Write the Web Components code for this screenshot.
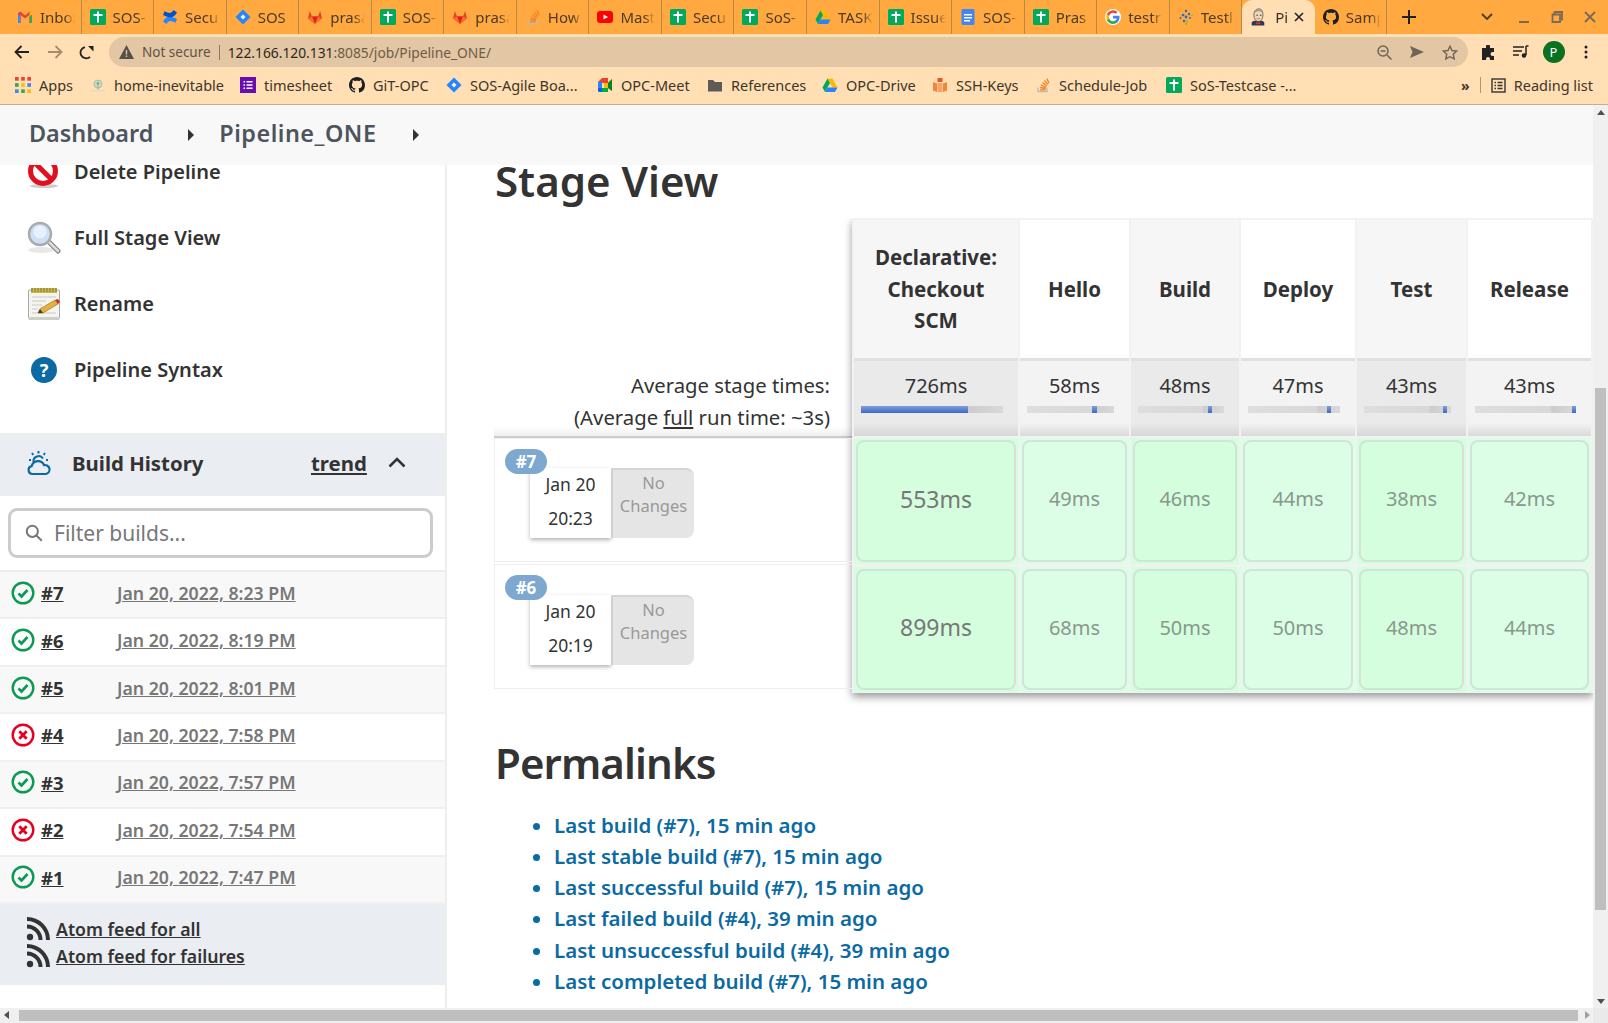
<!DOCTYPE html>
<html lang="en"><head><meta charset="utf-8"><title>Pipeline_ONE</title>
<style>
html,body{margin:0;padding:0;height:100%;overflow:hidden;background:#fff}
body{font-family:"Noto Sans","Open Sans",sans-serif;color:#333}
</style></head><body>
<jk-app>
  <chrome-tabstrip>
    <chrome-tab icon="gmail">Inbox</chrome-tab><chrome-tab icon="sheet">SOS-</chrome-tab><chrome-tab icon="conf">Secu</chrome-tab><chrome-tab icon="jira">SOS</chrome-tab><chrome-tab icon="gitlab">prasa</chrome-tab><chrome-tab icon="sheet">SOS-</chrome-tab><chrome-tab icon="gitlab">prasa</chrome-tab><chrome-tab icon="so">How</chrome-tab><chrome-tab icon="yt">Mast</chrome-tab><chrome-tab icon="sheet">Secu</chrome-tab><chrome-tab icon="sheet">SoS-</chrome-tab><chrome-tab icon="drive">TASK</chrome-tab><chrome-tab icon="sheet">Issue</chrome-tab><chrome-tab icon="docs">SOS-</chrome-tab><chrome-tab icon="sheet">Pras</chrome-tab><chrome-tab icon="google">testr</chrome-tab><chrome-tab icon="testl">Testl</chrome-tab><chrome-tab icon="jenkins" active>Pi</chrome-tab><chrome-tab icon="github">Samp</chrome-tab>
  </chrome-tabstrip>
  <chrome-toolbar></chrome-toolbar>
  <chrome-bookmarks>
    <chrome-bookmark icon="apps" w="75">Apps</chrome-bookmark><chrome-bookmark icon="home" w="150">home-inevitable</chrome-bookmark><chrome-bookmark icon="purple" w="109">timesheet</chrome-bookmark><chrome-bookmark icon="github" w="97">GiT-OPC</chrome-bookmark><chrome-bookmark icon="jira" w="151">SOS-Agile Boa...</chrome-bookmark><chrome-bookmark icon="meet" w="110">OPC-Meet</chrome-bookmark><chrome-bookmark icon="folder" w="115">References</chrome-bookmark><chrome-bookmark icon="drive" w="110">OPC-Drive</chrome-bookmark><chrome-bookmark icon="aws" w="103">SSH-Keys</chrome-bookmark><chrome-bookmark icon="so" w="131">Schedule-Job</chrome-bookmark><chrome-bookmark icon="sheet" w="160">SoS-Testcase -...</chrome-bookmark>
  </chrome-bookmarks>
  <jk-viewport>
    <jk-breadcrumb></jk-breadcrumb>
    <jk-sidebar>
      <jk-task icon="delete">Delete Pipeline</jk-task>
      <jk-task icon="search">Full Stage View</jk-task>
      <jk-task icon="notepad">Rename</jk-task>
      <jk-task icon="help">Pipeline Syntax</jk-task>
      <jk-build-history>
        <jk-build-row n="7" ok>Jan 20, 2022, 8:23 PM</jk-build-row>
        <jk-build-row n="6" ok>Jan 20, 2022, 8:19 PM</jk-build-row>
        <jk-build-row n="5" ok>Jan 20, 2022, 8:01 PM</jk-build-row>
        <jk-build-row n="4">Jan 20, 2022, 7:58 PM</jk-build-row>
        <jk-build-row n="3" ok>Jan 20, 2022, 7:57 PM</jk-build-row>
        <jk-build-row n="2">Jan 20, 2022, 7:54 PM</jk-build-row>
        <jk-build-row n="1" ok>Jan 20, 2022, 7:47 PM</jk-build-row>
      </jk-build-history>
    </jk-sidebar>
    <jk-main>
      <jk-stage-view></jk-stage-view>
      <jk-permalinks>
        <li>Last build (#7), 15 min ago</li>
        <li>Last stable build (#7), 15 min ago</li>
        <li>Last successful build (#7), 15 min ago</li>
        <li>Last failed build (#4), 39 min ago</li>
        <li>Last unsuccessful build (#4), 39 min ago</li>
        <li>Last completed build (#7), 15 min ago</li>
      </jk-permalinks>
    </jk-main>
  </jk-viewport>
</jk-app>
<script>
const GH='M8 0C3.58 0 0 3.58 0 8c0 3.54 2.29 6.53 5.47 7.59.4.07.55-.17.55-.38 0-.19-.01-.82-.01-1.49-2.01.37-2.53-.49-2.69-.94-.09-.23-.48-.94-.82-1.13-.28-.15-.68-.52-.01-.53.63-.01 1.08.58 1.23.82.72 1.21 1.87.87 2.33.66.07-.52.28-.87.51-1.07-1.78-.2-3.64-.89-3.64-3.95 0-.87.31-1.59.82-2.15-.08-.2-.36-1.02.08-2.12 0 0 .67-.21 2.2.82.64-.18 1.32-.27 2-.27.68 0 1.36.09 2 .27 1.53-1.04 2.2-.82 2.2-.82.44 1.1.16 1.92.08 2.12.51.56.82 1.27.82 2.15 0 3.07-1.87 3.75-3.65 3.95.29.25.54.73.54 1.48 0 1.07-.01 1.93-.01 2.2 0 .21.15.46.55.38A8.013 8.013 0 0016 8c0-4.42-3.58-8-8-8z';
const ICONS={
 gmail:[16,'<path d="M1 14V4l2.5-1.5L8 6.5v3L3.5 6v8z" fill="#ea4335"/><path d="M1 14h2.5V7L1 5z" fill="#4285f4"/><path d="M15 14V4l-2.5-1.5L8 6.500v3L12.500 6v8z" fill="#ea4335"/><path d="M15 14h-2.500V6.500L15 4.500z" fill="#34a853"/><path d="M12.500 2.500L15 4v1.500L12.500 7.500z" fill="#fbbc04"/>'],
 sheet:[16,'<rect width="16" height="16" rx="1.500" fill="#00a95c"/><path d="M7 2.500h2V5h3.500v2H9v6.500H7V7H3.500V5H7z" fill="#fff"/>'],
 conf:[16,'<path d="M1 12.500c3-5 6-6.500 14-2.500l-1.600 3.800c-5-2.500-6.500-2.300-9 1.200z" fill="#2684ff"/><path d="M15 3.500c-3 5-6 6.500-14 2.500l1.600-3.800c5 2.500 6.500 2.300 9-1.200z" fill="#0052cc"/>'],
 jira:[16,'<path d="M8 .5L15.500 8 8 15.500.5 8z" fill="#2684ff"/><path d="M8 5.500L10.500 8 8 10.500 5.500 8z" fill="#fff" opacity=".95"/>'],
 gitlab:[16,'<path d="M8 15L1 9.500 2.800 2 5 7.500h6L13.200 2 15 9.500z" fill="#e24329"/><path d="M8 15L5 7.500h6z" fill="#e02020"/><path d="M1 9.500L5 7.500 8 15z M15 9.500L11 7.500 8 15z" fill="#fc6d26"/>'],
 so:[16,'<path d="M3 10.500v4h9v-4" fill="none" stroke="#bcbbbb" stroke-width="1.300"/><path d="M5 12.800h5.500M5.200 10.500l5.400 1M6 8l5 2.300M7.500 5.500l4.300 3.400M9.500 3.300l3.200 4.200M12 1.500l1.900 4.800" fill="none" stroke="#f48024" stroke-width="1.300"/>'],
 yt:[16,'<rect y="2" width="16" height="12" rx="3" fill="#f00"/><path d="M6.500 5.500L11 8l-4.500 2.500z" fill="#fff"/>'],
 drive:[16,'<path d="M5.500 1.500h5l5 9h-5z" fill="#ffba00"/><path d="M5.500 1.500L.5 10.500 3 15l5-9z" fill="#00a95c"/><path d="M5.500 10.500h10L13 15H3z" fill="#2684fc"/>'],
 docs:[16,'<rect x="1.500" width="13" height="16" rx="1.500" fill="#4285f4"/><path d="M4 5h8v1.500H4zM4 8h8v1.500H4zM4 11h6v1.500H4z" fill="#fff"/>'],
 google:[16,'<circle cx="8" cy="8" r="8" fill="#fff"/><path d="M14.500 8.200c0-.5 0-1-.1-1.400H8v2.600h3.700c-.2.900-.7 1.600-1.400 2.100v1.700h2.200c1.300-1.200 2-3 2-5z" fill="#4285f4"/><path d="M8 15c1.800 0 3.400-.6 4.500-1.700l-2.200-1.700c-.6.400-1.400.7-2.300.7-1.800 0-3.300-1.200-3.800-2.800H1.900v1.800C3 13.500 5.300 15 8 15z" fill="#34a853"/><path d="M4.200 9.500a4 4 0 010-2.700V5H1.900a7 7 0 000 6.300z" fill="#fbbc04"/><path d="M8 3.800c1 0 1.900.3 2.600 1l1.900-1.900A7 7 0 001.900 5l2.300 1.800C4.700 5.100 6.200 3.800 8 3.800z" fill="#ea4335"/>'],
 testl:[16,'<g fill="#1c6fc9"><circle cx="8" cy="2" r="1.200"/><circle cx="5" cy="6" r="1.300"/><circle cx="11" cy="5" r="1.200"/><circle cx="8" cy="8" r="1.400"/><circle cx="2.500" cy="9" r="1"/><circle cx="6" cy="12" r="1.200"/><circle cx="12" cy="9" r="1"/></g><g fill="#8fae2c"><circle cx="9" cy="12.500" r="1.100"/><circle cx="8" cy="15" r=".9"/><circle cx="14" cy="6.500" r=".8"/></g>'],
 jenkins:[20,'<path d="M3 19.500v-3c0-1.500 3-2.500 7-2.500s7 1 7 2.500v3z" fill="#2b3a52"/><path d="M8 15l2 2 2.200-2 .5 2.500-2.700.8-2.500-.8z" fill="#d33833"/><path d="M5.500 7.500C5.500 3 8 1 11 1s4.500 2.500 4.500 6c0 5-2 8-5 8S5.500 11.500 5.500 7.500z" fill="#f0d6b7" stroke="#49423c" stroke-width=".8"/><path d="M6 6c1-3 3-4.500 5.500-4.500 2 0 3.500 1.500 3.800 4-1.500-1.500-3-2-5-2-1.800.2-3 1-4.300 2.500z" fill="#9b9b9b"/><circle cx="9" cy="8" r=".8" fill="#333"/><circle cx="13" cy="8" r=".8" fill="#333"/><path d="M8.500 11.500c1 .8 2.500 .8 3.500 0" stroke="#8a4a2a" stroke-width=".7" fill="none"/>'],
 github:[16,'<path d="'+GH+'" fill="#1b1f23"/>'],
 apps:[14,'<g fill="#ea4335"><rect width="3.200" height="3.200"/><rect x="5.400" width="3.200" height="3.200"/><rect x="10.800" width="3.200" height="3.200"/></g><g fill="#34a853"><rect y="5.400" width="3.200" height="3.200"/></g><rect x="5.400" y="5.400" width="3.200" height="3.200" fill="#fbbc04"/><rect x="10.800" y="5.400" width="3.200" height="3.200" fill="#4285f4"/><rect y="10.800" width="3.200" height="3.200" fill="#4285f4"/><rect x="5.400" y="10.800" width="3.200" height="3.200" fill="#34a853"/><rect x="10.800" y="10.800" width="3.200" height="3.200" fill="#fbbc04"/>'],
 home:[18,'<path d="M1 15.500h16" stroke="#d9dcc0" stroke-width="1.500"/><circle cx="9" cy="8" r="4.500" fill="#c7dcc4" stroke="#a5b99c"/><path d="M9 8v6" stroke="#aab89c" stroke-width="1.500"/><circle cx="9" cy="7" r="1.500" fill="#7ea98f"/>'],
 purple:[16,'<rect width="16" height="16" fill="#6a0dad"/><path d="M3.500 4h1.500v1.500H3.500zM6.500 4h6v1.500h-6zM3.500 7.200h1.500v1.500H3.500zM6.500 7.200h6v1.500h-6zM3.500 10.500h1.500V12H3.500zM6.500 10.500h6V12h-6z" fill="#fff"/>'],
 meet:[16,'<path d="M1 5l4-4h6v5H5v5H1z" fill="#ea4335"/><path d="M1 5h4v6H1z" fill="#2684fc"/><path d="M1 11h4v4H2.500A1.500 1.500 0 011 13.500z" fill="#0066da"/><path d="M5 11h6v4H5z" fill="#00ac47"/><path d="M11 1v5H7v5h4l4 3V2l-4 3z" fill="#ffba00"/><path d="M11 6l4-4v12l-4-3z" fill="#00832d"/>'],
 folder:[16,'<path d="M1 3h5l2 2h7v9.500H1z" fill="#5f5a55"/>'],
 aws:[16,'<path d="M5.500 1v4H8V1zM8 1v4h2.500V1z" fill="#e8552f"/><path d="M1 5l4 1.500V15l-4-1.500zM15 5l-4 1.500V15l4-1.500z" fill="#f58536"/><path d="M5.500 6h5v9h-5z" fill="#f9a26b"/>'],
 delete:[34,'<ellipse cx="17" cy="31" rx="14" ry="2" fill="#ccc"/><circle cx="16" cy="16" r="12.500" fill="#fff" stroke="#e2101f" stroke-width="5"/><path d="M7.500 7.500L24.500 24.500" stroke="#e2101f" stroke-width="5"/>'],
 search:[34,'<ellipse cx="14" cy="29" rx="13" ry="3" fill="#e8e8e8"/><path d="M21 20l10 10" stroke="#888" stroke-width="5" stroke-linecap="round"/><path d="M21 20l10 10" stroke="#ddd" stroke-width="2.500" stroke-linecap="round"/><circle cx="13" cy="13" r="11" fill="#cfe0f5" stroke="#a9acaf" stroke-width="2.500"/><circle cx="13" cy="11" r="6.500" fill="#e7f0fb"/>'],
 notepad:[34,'<rect x="1.500" y="3" width="31" height="28.500" rx="1" fill="#f4f4f0" stroke="#a9a9a5"/><rect x="1.500" y="30" width="31" height="3" fill="#cfcfca"/><rect x="4" y="1" width="26" height="5" fill="#c8b84c"/><path d="M5 1v4M8 1v4M11 1v4M14 1v4M17 1v4M20 1v4M23 1v4M26 1v4M29 1v4" stroke="#85782c"/><path d="M5 10h24M5 14h14M5 18h10M5 22h6M5 26h24" stroke="#c9c9c5"/><path d="M11 26l2-4 15-9 3 4-15 9z" fill="#e8b03c" stroke="#8a6a1e" stroke-width=".6"/><path d="M28 13l3 4 2-2-2-3z" fill="#d92d2d"/><path d="M11 26l2-4 3 4z" fill="#3f3f3f"/>'],
 help:[34,'<circle cx="17" cy="17" r="13" fill="#0b6aa2"/><text x="17" y="23.500" text-anchor="middle" font-family="Noto Sans" font-weight="700" font-size="18" fill="#fff">?</text>'],
 weather:[26,'<path d="M6.500 24a4 4 0 01-.8-7.900 6.500 6.500 0 0112.300-1 4.500 4.500 0 012 8.900z" fill="none" stroke="#0b6aa2" stroke-width="2.200"/><path d="M7.500 12a5.200 5.200 0 019.500-3.500" fill="none" stroke="#0b6aa2" stroke-width="2"/><path d="M3 10h2M12.500 1v2.500M6 3l1.300 1.800M19 3l-1.300 1.800M22 10h-2" stroke="#0b6aa2" stroke-width="2"/>'],
 ok:[24,'<circle cx="12" cy="12" r="10.300" fill="none" stroke="#0a9a53" stroke-width="2.400"/><path d="M7.500 12.500l3 3 6-6.500" fill="none" stroke="#0a9a53" stroke-width="2.600"/>'],
 fail:[24,'<circle cx="12" cy="12" r="10.300" fill="none" stroke="#e6001f" stroke-width="2.400"/><path d="M8.300 8.300l7.400 7.400M15.700 8.300l-7.400 7.400" fill="none" stroke="#e6001f" stroke-width="2.800"/>'],
 rss:[24,'<circle cx="4" cy="20" r="3.200" fill="#333"/><path d="M1 9.500a13.500 13.500 0 0113.500 13.500M1 2a21 21 0 0121 21" fill="none" stroke="#333" stroke-width="4"/>'],
 mag:[18,'<circle cx="7.500" cy="7.500" r="5" fill="none" stroke="#777" stroke-width="1.800"/><path d="M11 11l5 5" stroke="#777" stroke-width="1.800"/>']
};
function svg(name,size,style){const[v,b]=ICONS[name];return `<svg xmlns="http://www.w3.org/2000/svg" width="${size}" height="${size}" viewBox="0 0 ${v} ${v}" style="display:block;flex:none;${style||''}">${b}</svg>`}
function def(tag,css,html){customElements.define(tag,class extends HTMLElement{constructor(){super();this.attachShadow({mode:'open'})}connectedCallback(){this.shadowRoot.innerHTML='<style>'+css+'</style>'+html(this)}})}

def('jk-app',`:host{display:grid;grid-template-rows:34px 36px 35px 918px;height:1023px;width:1608px;overflow:hidden}`,()=>`<slot></slot>`);

def('chrome-tabstrip',`:host{display:flex;align-items:stretch;background:#ffa940;padding-left:9px;position:relative;font-size:15px;color:#4b3b28}
.plus{width:44px;display:flex;align-items:center;justify-content:center}
.win{margin-left:auto;display:flex;align-items:center;padding-right:1.500px;gap:0}
.win span{width:33px;display:flex;justify-content:center}`,()=>`<slot></slot>
<div class="plus"><svg width="14" height="14" viewBox="0 0 14 14"><path d="M7 0v14M0 7h14" stroke="#222" stroke-width="2"/></svg></div>
<div class="win" style="margin-left:auto">
<span style="margin-right:4px"><svg width="12" height="8" viewBox="0 0 12 8"><path d="M1 1l5 5 5-5" fill="none" stroke="#4b3b28" stroke-width="1.800"/></svg></span>
<span><svg width="12" height="12" viewBox="0 0 12 12"><path d="M1 11h10" stroke="#7a6a55" stroke-width="2"/></svg></span>
<span><svg width="12" height="12" viewBox="0 0 12 12"><path d="M1.500 3.500h7.500v7.500H1.500zM3.500 3V1h7.500v7.500h-2" fill="none" stroke="#7a6a55" stroke-width="1.800"/></svg></span>
<span><svg width="12" height="12" viewBox="0 0 12 12"><path d="M1 1l10 10M11 1L1 11" stroke="#7a6a55" stroke-width="1.800"/></svg></span>
</div>`);

def('chrome-tab',`:host{display:flex;align-items:center;flex:none;width:72.55px;box-sizing:border-box;padding-left:7px;gap:7px;height:34px;position:relative;border-right:1px solid #b88a4a;background-clip:padding-box}
:host([active]){background:#ffdfb3;border-radius:10px 10px 0 0;border-right:none;color:#3c3024;gap:8px}
.t{display:block;overflow:hidden;white-space:nowrap;width:35px;-webkit-mask-image:linear-gradient(to right,#000 70%,transparent);mask-image:linear-gradient(to right,#000 70%,transparent)}
:host([active]) .t{width:18px}
.x{margin-left:-7px}`,el=>{const a=el.hasAttribute('active');return svg(el.getAttribute('icon'),a?18:16,'margin-left:'+(a?-0:1)+'px')+`<span class="t"><slot></slot></span>`+(a?`<svg class="x" width="10" height="10" viewBox="0 0 10 10"><path d="M1 1l8 8M9 1L1 9" stroke="#222" stroke-width="1.600"/></svg>`:'')});

def('chrome-toolbar',`:host{display:flex;align-items:center;background:#ffdfb3;height:36px;font-size:13.800px;color:#3c3024}
.nav{width:109px;display:flex;align-items:center;flex:none;padding-left:14px;box-sizing:border-box;gap:16.500px}
.omni{width:1359px;height:30px;background:#e3c6a3;border-radius:15px;display:flex;align-items:center;flex:none;box-sizing:border-box;padding-left:10px}
.ns{color:#5f5246;margin-left:8px;font-size:13.500px}.sep{width:1px;height:15px;background:#8c7a63;margin:0 8px}
.host{color:#2f261c}.path{color:#6d5c48}
.right{margin-left:auto;display:flex;gap:17px;align-items:center;padding-right:10px}
.r2{display:flex;align-items:center;padding-left:13px;flex:1}
.av{width:22px;height:22px;border-radius:50%;background:#09711f;color:#fff;font-size:13px;display:flex;align-items:center;justify-content:center;margin:0 19px 0 14px;flex:none}`,()=>`
<div class="nav">
<svg width="16" height="14" viewBox="0 0 16 14"><path d="M15 7H2M7.500 1L1.500 7l6 6" fill="none" stroke="#222" stroke-width="1.800"/></svg>
<svg width="16" height="14" viewBox="0 0 16 14"><path d="M1 7h13M8.500 1l6 6-6 6" fill="none" stroke="#a28d72" stroke-width="1.800"/></svg>
<svg width="15" height="15" viewBox="0 0 15 15"><path d="M13 8.500A5.700 5.700 0 112.800 4.300" transform="rotate(40 7.500 7.500)" fill="none" stroke="#222" stroke-width="1.800"/><path d="M9 1h5.500v5.500z" fill="#222"/></svg>
</div>
<div class="omni">
<svg width="15" height="14" viewBox="0 0 15 14"><path d="M7.500 0L15 14H0z" fill="#555048"/><path d="M6.800 5h1.400v4.500H6.800zM6.800 10.500h1.400V12H6.800z" fill="#e3c6a3"/></svg>
<span class="ns">Not secure</span><span class="sep"></span><span><span class="host">122.166.120.131</span><span class="path">:8085/job/Pipeline_ONE/</span></span>
<span class="right">
<svg width="15" height="15" viewBox="0 0 15 15"><circle cx="6" cy="6" r="5" fill="none" stroke="#6e6558" stroke-width="1.500"/><path d="M3.500 6h5M10 10l4.500 4.500" stroke="#6e6558" stroke-width="1.500"/></svg>
<svg width="16" height="14" viewBox="0 0 16 14"><path d="M1 1l14 6-14 6 2.500-6z" fill="#6e6558"/></svg>
<svg width="16" height="15" viewBox="0 0 16 15"><path d="M8 1.200l2 4.300 4.700.6-3.400 3.200.9 4.600L8 11.700l-4.200 2.200.9-4.600L1.300 6.100 6 5.500z" fill="none" stroke="#6e6558" stroke-width="1.400"/></svg>
</span></div>
<div class="r2">
<svg width="15" height="15" viewBox="0 0 15 15" style="flex:none;margin-right:16.500px"><path d="M1 3h4V1.500a2 2 0 014 0V3h4v4h-1.500a2 2 0 000 4H13v4H9v-1a2 2 0 00-4 0v1H1z" fill="#222"/></svg>
<svg width="16" height="14" viewBox="0 0 16 14" style="flex:none"><path d="M0 2h11M0 6h9M0 10h6M13 1v9" stroke="#222" stroke-width="1.500"/><circle cx="11" cy="10.500" r="2.300" fill="#222"/><path d="M13 1h2.500" stroke="#222" stroke-width="1.500"/></svg>
<span class="av">P</span>
<svg width="4" height="14" viewBox="0 0 4 14" style="flex:none"><circle cx="2" cy="2" r="1.500" fill="#222"/><circle cx="2" cy="7" r="1.500" fill="#222"/><circle cx="2" cy="12" r="1.500" fill="#222"/></svg>
</div>`);

def('chrome-bookmarks',`:host{display:flex;align-items:center;background:#ffdfb3;height:35px;box-sizing:border-box;padding:0 0 4px 15px;border-bottom:1px solid #c9ad8c;font-size:14.500px;color:#40352a}
.end{margin-left:auto;display:flex;align-items:center;padding-right:15px}
.sep{width:1px;height:16px;background:#a89478;margin:0 10px}
.m{font-weight:700;font-size:14px}`,()=>`<slot></slot><div class="end"><span class="m">»</span><span class="sep"></span>
<svg width="15" height="15" viewBox="0 0 15 15" style="margin-right:8px"><rect x="1" y="1" width="13" height="13" fill="none" stroke="#333" stroke-width="1.400"/><path d="M3.500 4.500h1.500M6.500 4.500h5M3.500 7.500h1.500M6.500 7.500h5M3.500 10.500h1.500M6.500 10.500h5" stroke="#333" stroke-width="1.300"/></svg>
<span>Reading list</span></div>`);

def('chrome-bookmark',`:host{display:flex;align-items:center;gap:8px;flex:none;white-space:nowrap}`,el=>{el.style.width=el.getAttribute('w')+'px';return svg(el.getAttribute('icon'),16)+`<slot></slot>`});

def('jk-viewport',`:host{display:grid;grid-template-columns:1593px 15px;grid-template-rows:903px 15px;width:1608px;height:918px;background:#fff}
.body{display:grid;grid-template-columns:447px 1146px;grid-template-rows:60px 843px;overflow:hidden}
::slotted(jk-breadcrumb){grid-column:1/3}
.vs{background:#f0f0f0;grid-row:1;grid-column:2;position:relative;display:flex;flex-direction:column;align-items:center}
.thumb{position:absolute;left:2px;width:11px;top:283px;height:522px;background:#bfbfbf}
.hs{background:#f0f0f0;grid-row:2;grid-column:1;position:relative}
.hthumb{position:absolute;left:19px;right:15px;top:2px;bottom:2px;background:#bfbfbf}
.corner{background:#eaeaea}
.au{margin-top:5px;width:0;height:0;border-left:4px solid transparent;border-right:4px solid transparent;border-bottom:5px solid #505050}
.ad{position:absolute;bottom:4px;width:0;height:0;border-left:4px solid transparent;border-right:4px solid transparent;border-top:5px solid #505050}
.al{position:absolute;left:4px;top:3px;width:0;height:0;border-top:4px solid transparent;border-bottom:4px solid transparent;border-right:5px solid #505050}
.ar{position:absolute;right:3px;top:3px;width:0;height:0;border-top:4px solid transparent;border-bottom:4px solid transparent;border-left:5px solid #a0a0a0}`,()=>`<div class="body"><slot></slot></div>
<div class="vs"><span class="au"></span><span class="thumb"></span><span class="ad"></span></div>
<div class="hs"><span class="al"></span><span class="hthumb"></span><span class="ar"></span></div><div class="corner"></div>`);

def('jk-breadcrumb',`:host{display:flex;align-items:center;background:#f8f8f8;height:60px;box-sizing:border-box;padding:0 0 4px 29px;font-size:23.400px;font-weight:600;color:#4d545d;position:relative;z-index:2}
.a{width:0;height:0;border-top:6px solid transparent;border-bottom:6px solid transparent;border-left:6px solid #333;margin-top:4px}`,()=>`<span id="d">Dashboard</span><span class="a" style="margin-left:35px;margin-right:25px"></span><span style="letter-spacing:.5px">Pipeline_ONE</span><span class="a" style="margin-left:37px"></span>`);

def('jk-sidebar',`:host{display:block;box-sizing:border-box;border-right:2px solid #eeeeee;height:843px;overflow:hidden}
.in{margin-top:-26px}`,()=>`<div class="in"><slot></slot></div>`);

def('jk-task',`:host{display:flex;align-items:center;height:66px;box-sizing:border-box;padding:0 0 0 27px;font-size:20px;font-weight:600;color:#333;gap:13px}
span{margin-top:-2px}`,el=>svg(el.getAttribute('icon'),34)+`<span><slot></slot></span>`);

def('jk-build-history',`:host{display:block;margin-top:30px;border-top:2px solid #eeeeee}
.head{height:61px;box-sizing:border-box;padding:0 0 6px 26px;background:#eaeef2;display:flex;align-items:center;font-size:20.400px;font-weight:700;color:#333}
.ti{margin-left:20px;width:239px}
.tr{text-decoration:underline}
.filter{height:76px;box-sizing:border-box;padding:12px 12px 12px 8px;border-bottom:2px solid #eaeef2}
.box{height:50px;box-sizing:border-box;border:3px solid #cccccc;border-radius:9px;display:flex;align-items:center;padding-left:13px;color:#777;font-size:21px;gap:10px}
.feed{background:#eaeef2;height:81px;box-sizing:border-box;padding:12px 0 0 26px;font-size:17.700px;font-weight:600;color:#333;line-height:27px}
.f{display:flex;align-items:center;gap:6px;text-decoration:underline}`,()=>`
<div class="head">${svg('weather',26)}<span class="ti">Build History</span><span class="tr">trend</span>
<svg width="18" height="11" viewBox="0 0 18 11" style="margin-left:21px"><path d="M1.500 9.500L9 2l7.500 7.500" fill="none" stroke="#333" stroke-width="2.500"/></svg></div>
<div class="filter"><div class="box">${svg('mag',20)}<span>Filter builds...</span></div></div>
<slot></slot>
<div class="feed"><div class="f">${svg('rss',24)}<span>Atom feed for all</span></div><div class="f">${svg('rss',24)}<span>Atom feed for failures</span></div></div>`);

def('jk-build-row',`:host{display:flex;align-items:center;height:47.430px;box-sizing:border-box;border-bottom:2px solid #eef0f3;padding:0 0 4px 11px;font-size:17.700px}
:host(:nth-child(odd)){background:#f8f8f8}
.n{font-weight:700;color:#333;text-decoration:underline;width:76px;margin-left:6px;font-size:18.500px}
.d{color:#777;font-weight:600;text-decoration:underline}`,el=>svg(el.hasAttribute('ok')?'ok':'fail',24)+`<span class="n">#${el.getAttribute('n')}</span><span class="d"><slot></slot></span>`);

def('jk-main',`:host{display:block;padding-left:48px;height:843px;position:relative}`,()=>`<slot></slot>`);

const STAGES=[['Declarative:<br>Checkout<br>SCM','726ms',0,75,'553ms','899ms'],['Hello','58ms',75,5,'49ms','68ms'],['Build','48ms',81,5,'46ms','50ms'],['Deploy','47ms',86,4.5,'44ms','50ms'],['Test','43ms',91,4.5,'38ms','48ms'],['Release','43ms',96.500,3.500,'42ms','44ms']];
def('jk-stage-view',`:host{display:block;font-size:20.300px;color:#333}
h2{margin:-1px 0 20px;font-size:42px;line-height:34px;font-weight:600;color:#333;letter-spacing:0}
.wrap{display:flex;margin-left:-1px;width:1099px;overflow:hidden;padding-bottom:14px}
.left{width:358px;flex:none;height:475px;display:flex;flex-direction:column;justify-content:flex-end}
.lab{text-align:right;padding-right:22px;line-height:32px;height:67px;background:linear-gradient(to bottom,#fff 58px,#eeeeee 67px)}
.lab u{text-decoration:underline}
.ln{height:2px;background:#cccccc}
.hist{height:125px;box-sizing:border-box;border:1px solid #eeeeee;border-right:none;position:relative;margin-bottom:2px;padding:30px 0 0 35px}
.hist.f{height:124px;padding-top:29px}
.hist:last-child{margin-bottom:4px}
.badge{position:absolute;left:10px;top:10px;width:42px;height:25px;border-radius:13px;background:#7ea8d0;color:#fff;font-weight:700;font-size:17px;display:flex;align-items:center;justify-content:center;z-index:1}
.hist.f .badge{top:10px}
.card{display:flex;height:70px}
.date{width:81px;background:#fff;box-shadow:0 2px 4px rgba(0,0,0,.3);font-size:17.500px;line-height:34px;text-align:center;box-sizing:border-box;height:70px;padding-top:0}
.date span{display:block;margin-top:-1px}
.chg{width:83px;background:#e5e5e5;border-radius:0 8px 8px 0;border-top:2px solid #d5d5d5;border-left:2px solid #d0d0d0;box-sizing:border-box;color:#999;font-size:16.500px;text-align:center;line-height:22.500px;padding-top:2px}
.grid{display:grid;flex:none;width:741px;box-sizing:border-box;padding:2px 2px 1px 2px;grid-template-columns:164px 109px 108px 114px 109px 123px;column-gap:2px;grid-template-rows:138px 80px 129px 125px;background:#f2f2f2;box-shadow:0 4px 8px rgba(0,0,0,.4);height:475px}
.h{font-weight:700;text-align:center;display:flex;align-items:center;justify-content:center;line-height:31.500px;font-size:20.500px;padding-top:1px;box-sizing:border-box}
.h.o{background:#f6f6f6}.h.e{background:#fff}
.a{height:78px;box-sizing:border-box;border-top:3px solid #e0e0e0;text-align:center;padding:11px 0 0 0;line-height:27px;position:relative;font-size:20px}
.a.o{background:linear-gradient(to bottom,#eaeaea 0,#eaeaea 62px,#d6d6d6 75px)}
.a.e{background:linear-gradient(to bottom,#f3f3f3 0,#f3f3f3 62px,#dadada 75px)}
.tr{height:7px;margin:7px 15px 0 7px;position:relative;background:linear-gradient(to right,#dedede 0,#d8d8d8 75%,#cccccc 76%,#d9d9d9 100%)}
.tr i{position:absolute;top:0;bottom:0;background:linear-gradient(to bottom,#7f9fd8,#3e68c4)}
.c{padding:2px;box-sizing:border-box;height:126px}
.c.l{height:125px}
.c.o{background:#d4fedd}.c.e{background:#dcfde6}
.c div{height:100%;box-sizing:border-box;border:2px solid #cfe5d5;border-radius:8px;display:flex;align-items:center;justify-content:center;color:#87998b;font-size:20px;padding-bottom:5px}
.c.big div{color:#777;font-size:23px}`,()=>{
 let g='';
 STAGES.forEach((s,i)=>g+=`<div class="h ${i%2?'e':'o'}"><span>${s[0]}</span></div>`);
 STAGES.forEach((s,i)=>g+=`<div class="a ${i%2?'e':'o'}">${s[1]}<div class="tr"><i style="left:${s[2]}%;width:${s[3]}%"></i></div></div>`);
 for(const k of [4,5]) STAGES.forEach((s,i)=>g+=`<div class="c ${i%2?'e':'o'} ${i?'':'big'} ${k==5?'l':''}"><div>${s[k]}</div></div>`);
 const hist=(n,t,f)=>`<div class="hist ${f?'f':''}"><span class="badge">#${n}</span><div class="card"><div class="date"><span>Jan 20<br>${t}</span></div><div class="chg">No<br>Changes</div></div></div>`;
 return `<h2>Stage View</h2><div class="wrap"><div class="left"><div class="lab">Average stage times:<br>(Average <u>full</u> run time: ~3s)</div><div class="ln"></div>${hist(7,'20:23',1)}${hist(6,'20:19',0)}</div><div class="grid">${g}</div></div>`});

def('jk-permalinks',`:host{display:block;margin-top:31px;color:#333}
h2{margin:0 0 21.500px;font-size:42px;line-height:50px;font-weight:600;letter-spacing:-.9px}
ul{margin:0;padding:0 0 0 59px;font-size:20.500px;line-height:31.300px;font-weight:600;color:#0b6aa2;list-style:disc}
::slotted(li){color:#0b6aa2}`,()=>`<h2>Permalinks</h2><ul><slot></slot></ul>`);
</script>
</body></html>
